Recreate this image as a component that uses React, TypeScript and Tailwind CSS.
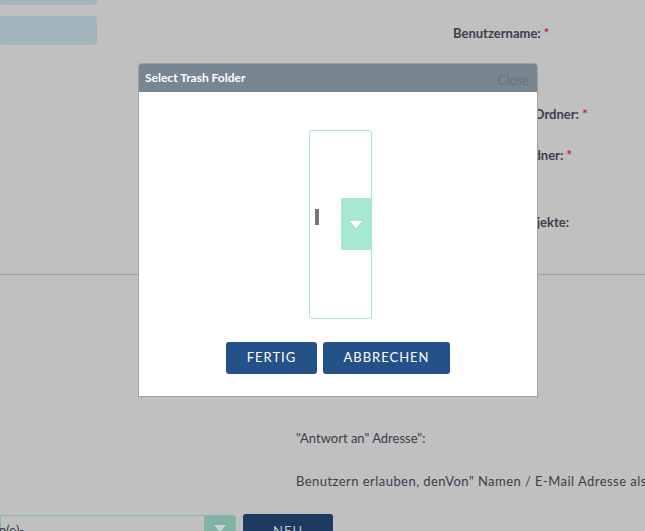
import React from "react";

export default function App() {
  const font = { fontFamily: "Lato, 'Open Sans', sans-serif" };
  return (
    <div
      className="relative w-[645px] h-[531px] overflow-hidden bg-[#c0c0c0] text-[#3b3e4d]"
      style={font}
    >
      {/* Page behind overlay */}
      <div className="h-[275px] border-b border-[#a3a3a3] flex">
        <div className="w-[97px] flex flex-col shrink-0">
          <div className="h-[5px] bg-[#a4b4bd] rounded-b-[3px]" />
          <div className="mt-[11px] h-[29px] bg-[#a4b4bd] rounded-[3px]" />
        </div>
        <div className="flex flex-col pl-[356px] text-[13px] leading-[16px] font-bold whitespace-nowrap">
          <div className="mt-[25px]">
            Benutzername: <span className="text-[#c2262a]">*</span>
          </div>
          <div className="mt-[65px] ml-[7px]">
            Überwachte Ordner: <span className="text-[#c2262a]">*</span>
          </div>
          <div className="mt-[25px] -ml-[1px]">
            Papierkorb Ordner: <span className="text-[#c2262a]">*</span>
          </div>
          <div className="mt-[51px] ml-[15px]">Erstellte Objekte:</div>
        </div>
      </div>
      <div className="flex flex-col text-[13px] leading-[16px] whitespace-nowrap">
        <div className="ml-[296px] mt-[155px]">"Antwort an" Adresse":</div>
        <div className="ml-[296px] mt-[27px] tracking-[0.45px]">
          Benutzern erlauben, denVon" Namen / E-Mail Adresse als Antwortadresse zu verwenden:
        </div>
        <div className="mt-[26px] flex items-start">
          <div className="w-[236px] h-[30px] border border-[#84b8a9] rounded-r-[3px] flex bg-[#c0c0c0]">
            <div className="flex-1 pt-[6px] -ml-[2px]">n(e)-</div>
            <div className="w-[31px] h-full bg-[#82b2a5] flex items-start justify-center pt-[9px]">
              <svg width="12" height="7" viewBox="0 0 12 7">
                <path d="M0 0 L12 0 L6 7 Z" fill="#c7d3d0" />
              </svg>
            </div>
          </div>
          <div className="ml-[7px] -mt-[1px] w-[90px] h-[32px] bg-[#1d3b61] rounded-[3px] flex justify-center pt-[9px] text-[#bcc4cc] text-[13px] tracking-[1px]">
            NEU
          </div>
        </div>
      </div>

      {/* Dialog */}
      <div className="absolute left-[138px] top-[63px] w-[400px] h-[334px] border border-[#a0a0a0] bg-white rounded-t-[3px] flex flex-col">
        <div className="h-[28px] bg-[#788692] flex justify-between items-start pl-[6px] pr-[8px] rounded-t-[2px]">
          <div className="mt-[6px] text-[12px] leading-[15px] font-bold text-white">
            Select Trash Folder
          </div>
          <div className="mt-[8px] text-[13px] leading-[16px] text-[#66727c]">Close</div>
        </div>
        <div className="ml-[170px] mt-[38px] w-[63px] h-[189px] border border-[#a6e8d3] rounded-[3px] flex items-center">
          <div className="ml-[5px] mb-[16px] w-[4px] h-[16px] bg-[#777777]" />
          <div className="ml-auto mb-[1px] w-[30px] h-[52px] bg-[#a6e8d3] flex items-center justify-center">
            <svg width="12" height="7" viewBox="0 0 12 7">
              <path d="M0 0 L12 0 L6 7 Z" fill="#ffffff" />
            </svg>
          </div>
        </div>
        <div className="mt-[23px] flex justify-center gap-[6px]">
          <div className="w-[91px] h-[32px] bg-[#245187] rounded-[3px] flex items-center justify-center text-white text-[13px] tracking-[1px]">
            FERTIG
          </div>
          <div className="w-[127px] h-[32px] bg-[#245187] rounded-[3px] flex items-center justify-center text-white text-[13px] tracking-[1px]">
            ABBRECHEN
          </div>
        </div>
      </div>
    </div>
  );
}
